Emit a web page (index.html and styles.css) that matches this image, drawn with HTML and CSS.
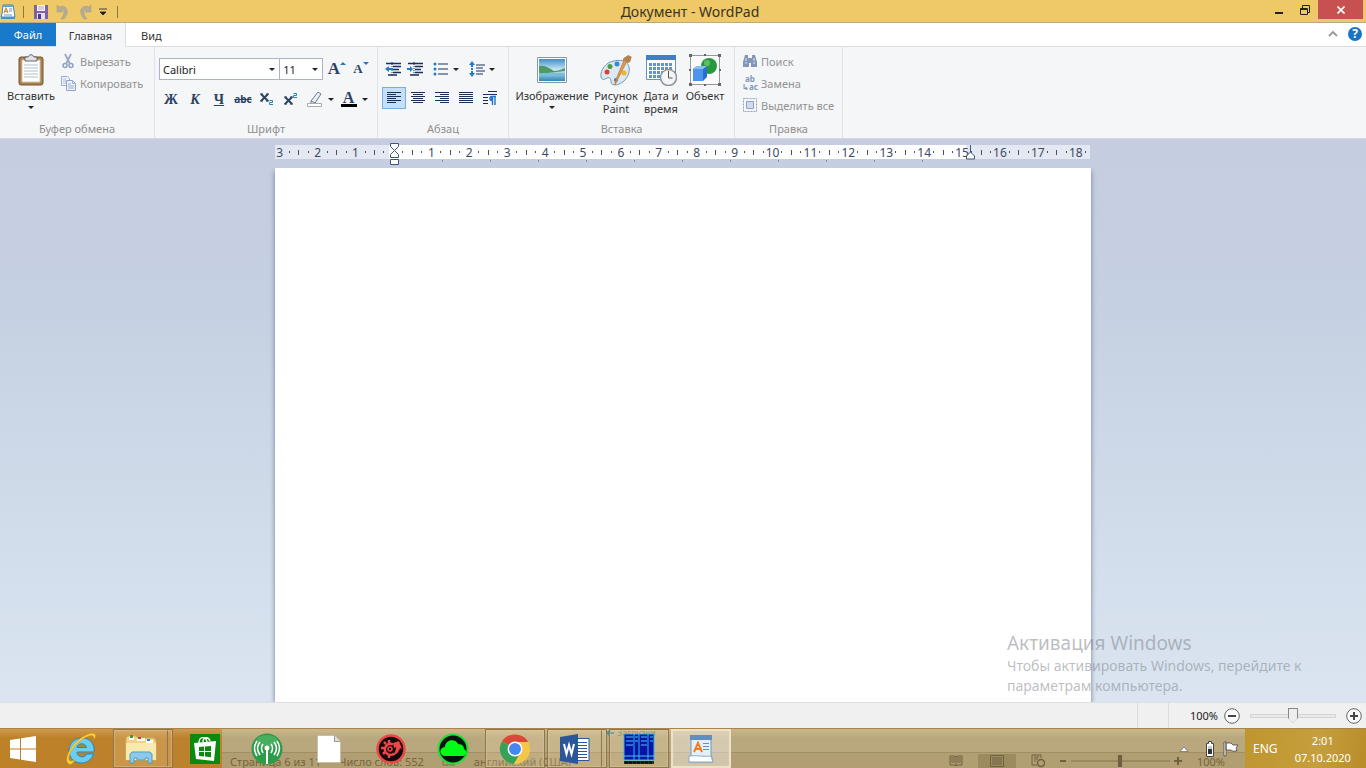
FILE: index.html
```html
<!DOCTYPE html>
<html lang="ru">
<head>
<meta charset="utf-8">
<title>Документ - WordPad</title>
<link rel="stylesheet" href="styles.css">
</head>
<body>
<header class="titlebar">
  <div class="quick">
    <svg class="app-icon" width="16" height="16" viewBox="0 0 16 16"><path d="M3 1h10l2 12H1l1-3z" fill="#fff" stroke="#3c87b8"/><path d="M2.500 1h11v2h-11z" fill="#62a5cf"/><path d="M4 9l2-5 2 5M5 7.500h2" fill="none" stroke="#e08030" stroke-width="1.200"/><path d="M9 5h3M9 7h3M4 11h8" stroke="#5b9bc4"/><path d="M1 13h14v2H1z" fill="#4b92bd"/></svg>
    <span class="sep"></span>
    <button class="qbtn" aria-label="Сохранить"><svg width="14" height="14" viewBox="0 0 14 14"><path d="M0 0h14v14H0z" fill="#7f62a6"/><path d="M3 0h8v6H3z" fill="#f8f4ff"/><path d="M4 2h6M4 4h6" stroke="#b7a5cf"/><path d="M3 8h8v6H3z" fill="#e4dcf0"/><path d="M4 9h3v5H4z" fill="#503a80"/></svg></button>
    <button class="qbtn" aria-label="Отменить"><svg width="16" height="16" viewBox="0 0 16 16"><path d="M2 1l2 2c7-3 12 4 5 12H6c4-5 4-10 0-9l2 2H2z" fill="#b3ad97" stroke="#a39c82" stroke-width=".5"/></svg></button>
    <button class="qbtn" aria-label="Вернуть"><svg width="16" height="16" viewBox="0 0 16 16"><path d="M14 1l-2 2C5 0 0 7 7 15h3C6 10 6 5 10 6L8 8h6z" fill="#b3ad97" stroke="#a39c82" stroke-width=".5"/></svg></button>
    <button class="qbtn more" aria-label="Настройка панели"><svg width="8" height="8" viewBox="0 0 8 8"><path d="M0 1h8M1 4h6L4 7z" fill="#222" stroke="#222" stroke-width=".8"/></svg></button>
    <span class="sep"></span>
  </div>
  <h1 class="title">Документ - WordPad</h1>
  <div class="winbtns">
    <button class="wbtn" aria-label="Свернуть"><svg width="10" height="10" viewBox="0 0 10 10"><path d="M1 7h8v2H1z" fill="#222"/></svg></button>
    <button class="wbtn" aria-label="Восстановить"><svg width="10" height="10" viewBox="0 0 10 10"><path d="M.5 3.500h7v6h-7zM1 4.500h6M2.500 3V.5h7v7H8" fill="none" stroke="#222"/></svg></button>
    <button class="wbtn close" aria-label="Закрыть"><svg width="8" height="8" viewBox="0 0 8 8"><path d="M.5.5l7 7M7.500.5l-7 7" stroke="#fff" stroke-width="1.600"/></svg></button>
  </div>
</header>

<nav class="tabs">
  <button class="tab file">Файл</button>
  <button class="tab active">Главная</button>
  <button class="tab">Вид</button>
  <div class="tabtools">
    <button class="tool" aria-label="Свернуть ленту"><svg width="10" height="8" viewBox="0 0 10 8"><path d="M1 6l4-4 4 4" fill="none" stroke="#999" stroke-width="1.800"/></svg></button>
    <button class="tool help" aria-label="Справка">?</button>
  </div>
</nav>

<main class="ribbon">
  <section class="group g-clip">
    <div class="content">
      <button class="big paste"><svg width="32" height="32" viewBox="0 0 32 32"><rect x="4" y="3" width="24" height="28" rx="2" fill="#a9804a" stroke="#76572f"/><path d="M7 6h18v22H7z" fill="#fff" stroke="#d2c8b7"/><path d="M9 11h14M9 14h14M9 17h14M9 20h14M9 23h14" stroke="#b2bfcc"/><path d="M10 3h3c1-3 5-3 6 0h3v4H10z" fill="#dfe3e6" stroke="#666"/></svg><span>Вставить</span><i class="arrow"></i></button>
      <div class="stack">
        <button class="small" disabled><svg width="16" height="16" viewBox="0 0 16 16"><path d="M5 1l5 10M11 1L6 11" stroke="#9aa9c0" stroke-width="1.800"/><circle cx="5" cy="12.500" r="2" fill="none" stroke="#8fa3c4" stroke-width="1.500"/><circle cx="11" cy="12.500" r="2" fill="none" stroke="#8fa3c4" stroke-width="1.500"/></svg>Вырезать</button>
        <button class="small" disabled><svg width="16" height="16" viewBox="0 0 16 16"><path d="M1.500 1.500h6l2 2v7h-8z" fill="#eef2fa" stroke="#9daed0"/><path d="M3 4h3M3 6h5M3 8h5" stroke="#b2c0dc"/><path d="M6.500 5.500h6l3 3v7h-9z" fill="#eef2fa" stroke="#8fa3c9"/><path d="M12.500 5.500v3h3M8 9h3M8 11h6M8 13h6" fill="none" stroke="#9daed0"/></svg>Копировать</button>
      </div>
    </div>
    <h2>Буфер обмена</h2>
  </section>

  <section class="group g-font">
    <div class="rows">
      <div class="row">
        <label class="combo family"><select aria-label="Шрифт"><option>Calibri</option></select></label>
        <label class="combo size"><select aria-label="Размер шрифта"><option>11</option></select></label>
        <button class="ic grow" aria-label="Увеличить шрифт"><span class="serif s17">A</span><i class="up"></i></button>
        <button class="ic" aria-label="Уменьшить шрифт"><span class="serif s13">A</span><i class="down"></i></button>
      </div>
      <div class="row">
        <button class="ic serif s14">Ж</button>
        <button class="ic serif s14 ital">К</button>
        <button class="ic serif s14 under">Ч</button>
        <button class="ic abc">abc</button>
        <button class="ic xs" aria-label="Подстрочный"><svg width="14" height="14" viewBox="0 0 14 14"><path d="M1 2l7 7M8 2L1 9" stroke="#2c4263" stroke-width="2"/><path d="M0 2h3M6 2h3M0 9h3M6 9h3" stroke="#2c4263"/><path d="M9.500 8.500h3v2h-3v2h3.500" fill="none" stroke="#2287a8"/></svg></button>
        <button class="ic xs" aria-label="Надстрочный"><svg width="14" height="14" viewBox="0 0 14 14"><path d="M1 5l7 7M8 5l-7 7" stroke="#2c4263" stroke-width="2"/><path d="M0 5h3M6 5h3M0 12h3M6 12h3" stroke="#2c4263"/><path d="M9.500 1.500h3v2h-3v2h3.500" fill="none" stroke="#2287a8"/></svg></button>
        <button class="ic wide" aria-label="Цвет выделения"><svg width="16" height="16" viewBox="0 0 16 16"><path d="M4 10l7-9 3 2-6 9-4 1z" fill="#e9eef4" stroke="#6c7b90"/><path d="M4 10l4 2" stroke="#6c7b90"/><path d="M.5 12.500h14v3H.5z" fill="#fff" stroke="#a9adb2"/></svg><i class="arrow"></i></button>
        <button class="ic wide" aria-label="Цвет текста"><span class="fontcolor serif">A</span><i class="arrow"></i></button>
      </div>
    </div>
    <h2>Шрифт</h2>
  </section>

  <section class="group g-para">
    <div class="rows">
      <div class="row">
        <button class="ic" aria-label="Уменьшить отступ"><svg width="16" height="14" viewBox="0 0 16 14"><path d="M1 1.500h15M8 4.500h8M8 7.500h6M8 10.500h8M3 13h9" stroke="#1b3059" stroke-width="1.400"/><path d="M7 0v14" stroke="#1b3059" stroke-dasharray="1 1"/><path d="M0 7l4-3v2h4v2H4v2z" fill="#2278c9"/></svg></button>
        <button class="ic" aria-label="Увеличить отступ"><svg width="16" height="14" viewBox="0 0 16 14"><path d="M1 1.500h15M8 4.500h8M8 7.500h6M8 10.500h8M3 13h9" stroke="#1b3059" stroke-width="1.400"/><path d="M7 0v14" stroke="#1b3059" stroke-dasharray="1 1"/><path d="M6 7L3 4v2H0v2h3v2z" fill="#2278c9"/></svg></button>
        <button class="ic wide" aria-label="Список"><svg width="16" height="14" viewBox="0 0 16 14"><path d="M5 2h10M5 7h10M5 12h10" stroke="#1b3059" stroke-width="1.200"/><circle cx="2" cy="2" r="1.500" fill="#2278c9"/><circle cx="2" cy="7" r="1.500" fill="#2278c9"/><circle cx="2" cy="12" r="1.500" fill="#2278c9"/></svg><i class="arrow"></i></button>
        <button class="ic wide last-ic" aria-label="Междустрочный интервал"><svg width="16" height="16" viewBox="0 0 16 16"><path d="M7 4h9M7 7h7M7 10h9M7 13h7" stroke="#1b3059" stroke-width="1.200"/><path d="M3 0l3 4H4v2H2V4H0zM3 16l3-4H4v-2H2v2H0zM2 7h2v2H2z" fill="#2278c9"/></svg><i class="arrow"></i></button>
      </div>
      <div class="row">
        <button class="ic on" aria-label="По левому краю"><svg width="14" height="12" viewBox="0 0 14 12"><path d="M0 .5h14M0 2.500h9M0 4.500h14M0 6.500h9M0 8.500h14M0 10.500h9" stroke="#1b3059"/></svg></button>
        <button class="ic" aria-label="По центру"><svg width="14" height="12" viewBox="0 0 14 12"><path d="M0 .5h14M2 2.500h10M0 4.500h14M2 6.500h10M0 8.500h14M2 10.500h10" stroke="#1b3059"/></svg></button>
        <button class="ic" aria-label="По правому краю"><svg width="14" height="12" viewBox="0 0 14 12"><path d="M0 .5h14M5 2.500h9M0 4.500h14M5 6.500h9M0 8.500h14M5 10.500h9" stroke="#1b3059"/></svg></button>
        <button class="ic" aria-label="По ширине"><svg width="14" height="12" viewBox="0 0 14 12"><path d="M0 .5h14M0 2.500h14M0 4.500h14M0 6.500h14M0 8.500h14M0 10.500h14" stroke="#1b3059"/></svg></button>
        <button class="ic" aria-label="Абзац"><svg width="14" height="14" viewBox="0 0 14 14"><path d="M5 .5h9M0 3.500h14M0 6.500h5M0 9.500h5M0 12.500h5" stroke="#1b3059"/><path d="M13 5.500H9a2 2 0 0 0 0 4M9.500 5v9M12 5v9" fill="none" stroke="#2278c9" stroke-width="1.400"/><path d="M7 6h3v3H8z" fill="#2278c9"/></svg></button>
      </div>
    </div>
    <h2>Абзац</h2>
  </section>

  <section class="group g-insert">
    <div class="content">
      <button class="big b-img"><svg width="32" height="32" viewBox="0 0 32 32"><defs><linearGradient id="sky" x2="0" y2="1"><stop offset="0" stop-color="#3d8fce"/><stop offset=".5" stop-color="#cfe8f2"/><stop offset="1" stop-color="#2f86b8"/></linearGradient></defs><path d="M1.500 3.500h29v25h-29z" fill="#fff" stroke="#8298a8"/><path d="M3 5h26v22H3z" fill="url(#sky)"/><path d="M3 12c7-1 11 3 15 5 4 0 8-2 11-3v3l-26 3z" fill="#4e9a62"/><path d="M3 19h26v2l-26 1z" fill="#77c0d8"/></svg><span>Изображение</span><i class="arrow"></i></button>
      <button class="big b-paint"><svg width="32" height="32" viewBox="0 0 32 32"><path d="M14 7C6 8 0 16 1 23c1 4 4 2 6 1 3-1 4 1 4 4 1 5 9 3 14-2 5-6 6-14 1-18-3-2-8-2-12-1z" fill="#dce9f2" stroke="#6d9ab8"/><circle cx="7" cy="18" r="2.500" fill="#d9412f"/><circle cx="10" cy="12.500" r="2.500" fill="#4a9c42"/><circle cx="17" cy="10" r="2.500" fill="#3c86d2"/><circle cx="24" cy="19" r="2.500" fill="#efb52b"/><circle cx="16" cy="26" r="2" fill="#3e73c4"/><path d="M27 7L16 29l-1 2 0-3L24 6z" fill="#e09b4c" stroke="#b06d2a" stroke-width=".6"/><path d="M23 6c0-3 3-3 5-5l4 2c-2 2 0 5-4 6z" fill="#b58250"/></svg><span>Рисунок<br>Paint</span></button>
      <button class="big b-date"><svg width="32" height="32" viewBox="0 0 32 32"><path d="M1.500 1.500h29v24h-29z" fill="#fff" stroke="#6c8eb8"/><path d="M1 1h30v5H1z" fill="#3f7fc4"/><path d="M4 10.500h24M4 14.500h24M4 18.500h20M4 22.500h12" stroke="#5e95d0" stroke-width="3" stroke-dasharray="3 1"/><circle cx="23.500" cy="23.500" r="8" fill="#f3f5f7" stroke="#8b949d" stroke-width="1.500"/><path d="M23.500 17v7h4" fill="none" stroke="#555"/></svg><span>Дата и<br>время</span></button>
      <button class="big b-obj"><svg width="32" height="32" viewBox="0 0 32 32"><path d="M1.500 1.500h29v29h-29z" fill="#fbfbfd" stroke="#999"/><path d="M0 0h3v3H0zM29 0h3v3h-3zM0 29h3v3H0zM29 29h3v3h-3zM0 15h2v2H0zM30 15h2v2h-2zM15 0h2v2h-2zM15 30h2v2h-2z" fill="#666"/><circle cx="20" cy="12" r="8" fill="#259a3b"/><circle cx="18" cy="9" r="3" fill="#63bd68"/><path d="M4 15l4-3h10v11l-4 4H4z" fill="#2a6fd0"/><path d="M4 15h10v12H4z" fill="#4c94ec"/><path d="M4 15l4-3h10l-4 3z" fill="#8cbdf5"/></svg><span>Объект</span></button>
    </div>
    <h2>Вставка</h2>
  </section>

  <section class="group g-edit">
    <div class="content stack">
      <button class="small" disabled><svg width="14" height="14" viewBox="0 0 14 14"><path d="M2 1h3v3h4V1h3l2 7v5H8V9H6v4H0V8z" fill="#8396b8"/><path d="M2 9h2M10 9h2M3 4v3M11 4v3" stroke="#dfe6f1"/></svg>Поиск</button>
      <button class="small" disabled><span class="repl"><b>ab</b><b>↳ac</b></span>Замена</button>
      <button class="small" disabled><svg width="14" height="14" viewBox="0 0 14 14"><path d="M.5.500h13v13H.5z" fill="none" stroke="#8fa3c4" stroke-dasharray="2 1"/><path d="M3.500 3.500h7v7h-7z" fill="#cfdaf0" stroke="#8fa3c4"/></svg>Выделить все</button>
    </div>
    <h2>Правка</h2>
  </section>
</main>

<section class="workspace">
  <div class="ruler">
    <div class="scale">
      <span class="cm out"><b>3</b><i></i><i></i><i></i></span>
      <span class="cm out"><b>2</b><i></i><i></i><i></i></span>
      <span class="cm out"><b>1</b><i></i><i></i><i></i></span>
      <span class="cm"><b></b><i></i><i></i><i></i></span>
      <span class="cm"><b>1</b><i></i><i></i><i></i></span>
      <span class="cm"><b>2</b><i></i><i></i><i></i></span>
      <span class="cm"><b>3</b><i></i><i></i><i></i></span>
      <span class="cm"><b>4</b><i></i><i></i><i></i></span>
      <span class="cm"><b>5</b><i></i><i></i><i></i></span>
      <span class="cm"><b>6</b><i></i><i></i><i></i></span>
      <span class="cm"><b>7</b><i></i><i></i><i></i></span>
      <span class="cm"><b>8</b><i></i><i></i><i></i></span>
      <span class="cm"><b>9</b><i></i><i></i><i></i></span>
      <span class="cm"><b>10</b><i></i><i></i><i></i></span>
      <span class="cm"><b>11</b><i></i><i></i><i></i></span>
      <span class="cm"><b>12</b><i></i><i></i><i></i></span>
      <span class="cm"><b>13</b><i></i><i></i><i></i></span>
      <span class="cm"><b>14</b><i></i><i></i><i></i></span>
      <span class="cm edge"><b>15</b><i></i><i></i><i></i></span>
      <span class="cm out"><b>16</b><i></i><i></i><i></i></span>
      <span class="cm out"><b>17</b><i></i><i></i><i></i></span>
      <span class="cm out last"><b>18</b><i></i></span>
    </div>
    <div class="stops"></div>
    <svg class="mark left" width="11" height="24" viewBox="0 0 11 24"><path d="M1.500 1.500h8v3l-4 4 4 4v3h-8v-3l4-4-4-4zM1.500 17.500h8v5h-8z" fill="#fff" stroke="#3c5876"/></svg>
    <svg class="mark right" width="11" height="16" viewBox="0 0 11 16"><path d="M5.500 1v7l4 4v3h-8v-3l4-4" fill="#fff" stroke="#3c5876"/></svg>
  </div>
  <div class="paper" contenteditable="true" role="textbox" aria-label="Документ"></div>
  <aside class="watermark"><p class="wm-title">Активация Windows</p><p>Чтобы активировать Windows, перейдите к<br>параметрам компьютера.</p></aside>
</section>

<footer class="status">
  <span class="cell"></span>
  <div class="zoom">
    <label for="zoom">100%</label>
    <button class="round" aria-label="Уменьшить"><svg width="16" height="16" viewBox="0 0 16 16"><circle cx="8" cy="8" r="7.300" fill="#fafafa" stroke="#666"/><path d="M4 8h8" stroke="#444" stroke-width="2"/></svg></button>
    <input id="zoom" type="range" min="0" max="100" value="50">
    <button class="round" aria-label="Увеличить"><svg width="16" height="16" viewBox="0 0 16 16"><circle cx="8" cy="8" r="7.300" fill="#fafafa" stroke="#666"/><path d="M4 8h8M8 4v8" stroke="#444" stroke-width="2"/></svg></button>
  </div>
</footer>

<nav class="taskbar">
  <div class="ghost">
    <span>Страница 6 из 11</span><span>Число слов: 552</span>
    <svg width="14" height="12" viewBox="0 0 14 12"><path d="M1 1v9h5V2M7 10h6M8 5l4 5M12 5l-4 5" fill="none" stroke="#7d6c48"/></svg>
    <span>английский (США)</span>
    <div class="ghost-right">
      <svg width="14" height="14" viewBox="0 0 14 14"><path d="M1 2h5l1 1 1-1h5v9H8l-1 1-1-1H1zM7 3v9M2 4h4M2 6h4M2 8h4M8 4h4M8 6h4M8 8h4" fill="none" stroke="#6f6040"/></svg>
      <span class="ghost-on"><svg width="14" height="12" viewBox="0 0 14 12"><path d="M.5.5h13v11H.5zM2 3h10M2 5h10M2 7h10M2 9h10" fill="none" stroke="#6f6040"/></svg></span>
      <svg width="14" height="14" viewBox="0 0 14 14"><path d="M6 11H1V1h9v3M3 3h5M3 5h4M3 7h2" fill="none" stroke="#6f6040"/><circle cx="10" cy="9" r="3.500" fill="none" stroke="#6f6040" stroke-width="1.500"/></svg>
      <svg class="ghost-zoom" width="122" height="12" viewBox="0 0 122 12"><path d="M0 6h6M114 6h8M118 2v8" stroke="#6f6040" stroke-width="2"/><path d="M11 6h99" stroke="#83734d"/><path d="M58 0h4v12h-4z" fill="#6f6040"/></svg>
      <span>100%</span>
    </div>
  </div>
  <div class="snap"><svg width="8" height="8" viewBox="0 0 8 8"><path d="M0 4l4-4v3h4v2H4v3z" fill="#4c92a0"/></svg>Загрузки</div>
  <div class="tasks">
    <button class="start" aria-label="Пуск"><svg width="28" height="26" viewBox="0 0 28 26"><path d="M1 4l10-1.500V12.500H1zM12 2.300L27 0v12.500H12zM1 13.500h10v10L1 22zM12 13.500h15V26l-15-2.300z" fill="#fff"/></svg></button>
    <button class="task" aria-label="Internet Explorer"><svg width="32" height="32" viewBox="0 0 32 32"><path d="M29 19H12c0 5 7 7 10 2h6.500c-2 6-7 9-12 9C8 30 4 24 4 17.500S9 5 17 5s13 6 12 14zM12 14.500h9.500c-1-5-8.500-5-9.500 0z" fill="#6cccf2" stroke="#2389c2"/><path d="M4 31C-2 27 5 13 16 5 22 1 28-1 30 1c1 2 0 4-1 5 0-5-5-4-11 0C8 13 3 22 4 26c0 3 3 2 6 1-2 3-4 5-6 4z" fill="#ffd435" stroke="#d79c1c" stroke-width=".6"/></svg></button>
    <button class="task open multi" aria-label="Проводник"><svg width="32" height="30" viewBox="0 0 32 30"><path d="M1 4l2-2h8l2 2h16l2 3v19H1z" fill="#eed484" stroke="#cfae58"/><path d="M4 3h5v3H4zM12 4h8v3h-8zM21 6h7v3h-7z" fill="#fff"/><path d="M5 1h3v3H5z" fill="#39a13a"/><path d="M13 3h3v2h-3z" fill="#c34a31"/><path d="M22 5h3v2h-3z" fill="#3385ce"/><path d="M1 9h30v17H1z" fill="#f8e9ae"/><path d="M5 29V20l2-2h18l2 2v9h-4v-5h-3v2h-8v-2H9v5z" fill="#8dcaea" stroke="#4d9dc8"/></svg></button>
    <button class="task" aria-label="Магазин"><svg width="30" height="30" viewBox="0 0 30 30"><path d="M0 0h30v30H0z" fill="#0c8a10"/><path d="M4 9l22-2-2 20-18-2z" fill="#fff"/><path d="M9 9c0-7 7-7 8-1M13 8c0-6 6-5 7-1" fill="none" stroke="#fff" stroke-width="1.300"/><path d="M9 13l5-.5V17H9zM15 12.400l6-.4v5h-6zM9 18h5v4.500L9 22zM15 18h6v5.300l-6-.7z" fill="#0c8a10"/></svg></button>
    <button class="task" aria-label="Сеть"><svg width="32" height="32" viewBox="0 0 32 32"><circle cx="16" cy="16" r="15.500" fill="#2b9d48"/><ellipse cx="16" cy="8" rx="11" ry="6" fill="#5bbb70" opacity=".6"/><path d="M16 17v14" stroke="#fff" stroke-width="2"/><circle cx="16" cy="15" r="2.500" fill="#fff"/><path d="M12 11q-3 4 0 9M20 11q3 4 0 9M9 9q-5 6 0 13M23 9q5 6 0 13M6 8q-5 7 0 15M26 8q5 7 0 15" fill="none" stroke="#fff" stroke-width="1.500"/></svg></button>
    <button class="task" aria-label="Файл"><svg width="24" height="28" viewBox="0 0 24 28"><path d="M.5.500h17l6 6v21H.5z" fill="#fff" stroke="#c5bfae"/><path d="M17.500.5v6h6" fill="#ddd" stroke="#999"/></svg></button>
    <button class="task" aria-label="Настройки"><svg width="30" height="30" viewBox="0 0 30 30"><circle cx="15" cy="15" r="13.500" fill="#150808" stroke="#ed4747" stroke-width="2.500"/><path d="M18 19.500a5.500 5.500 0 1 1-1-9" fill="none" stroke="#ed4747" stroke-width="2.500"/><path d="M8 8l2 2M13 6v3M5 14h3M7 20l2-2M13 24v-3" stroke="#ed4747" stroke-width="2.500"/><path d="M17 9l6-2 3 8-2-1c-1 4-4 7-8 8 3-3 4-6 4-9l-2 1z" fill="#ed4747"/><circle cx="14" cy="15" r="2" fill="none" stroke="#ed4747" stroke-width="1.500"/></svg></button>
    <button class="task" aria-label="Облако"><svg width="32" height="32" viewBox="0 0 32 32"><circle cx="16" cy="16" r="14.500" fill="#06130a" stroke="#20e135" stroke-width="2"/><path d="M5 22c-4-4 0-8 3-8 0-8 11-9 13-3 5 0 6 3 6 5 4 2 2 7-1 7H7z" fill="#00fb16"/></svg></button>
    <button class="task open" aria-label="Chrome"><svg width="32" height="32" viewBox="0 0 32 32"><circle cx="16" cy="16" r="15" fill="#f3c747"/><path d="M16 16L3 8.500C8-1 24-1 29 8.500z" fill="#d8483b"/><path d="M3 8.500C-3 18 4 30 15 31l7-12-6-3z" fill="#35a159"/><path d="M16 9h13c5 10-2 22-14 22l7-12z" fill="#f3c747"/><circle cx="16" cy="16" r="7.500" fill="#fff"/><circle cx="16" cy="16" r="6" fill="#4587ef"/></svg></button>
    <button class="task open multi" aria-label="Word"><svg width="30" height="30" viewBox="0 0 30 30"><path d="M15 4.500h14v22H15z" fill="#fff" stroke="#2b579a"/><path d="M18 8.500h9M18 11.500h9M18 14.500h9M18 17.500h9M18 20.500h9M18 23.500h9" stroke="#2b579a"/><path d="M0 3l18-3v30L0 27z" fill="#2b579a"/><path d="M4 10l2.500 10L9 11l2.500 9L14 10" fill="none" stroke="#fff" stroke-width="2"/></svg></button>
    <button class="task open" aria-label="Far"><svg width="32" height="32" viewBox="0 0 32 32"><path d="M1 1h30v26H1z" fill="#0612a8" stroke="#28bbe8"/><path d="M11 1v26M16 1v26M25 1v26" stroke="#28bbe8"/><path d="M3 4h7M3 8h7M3 12h7M12 4h3M12 8h3M18 4h6M18 8h6M18 12h6M27 4h3M27 8h3M1 23h30" stroke="#45c9ee"/><path d="M1 28h30v3H1z" fill="#073d45"/><path d="M2 29.500h28" stroke="#05090c" stroke-width="2" stroke-dasharray="3 1"/></svg></button>
    <button class="task open current" aria-label="WordPad"><svg width="26" height="28" viewBox="0 0 26 28"><path d="M3 1h20v18l2 8H1l2-7z" fill="#e4eff8" stroke="#6f9bc2"/><path d="M2 0h22v5H2z" fill="#5f8fbe"/><path d="M6 17l4-9 4 9M7.500 14h5" fill="none" stroke="#ef7e23" stroke-width="2"/><path d="M15 8.500h6M15 11.500h6M15 14.500h6" stroke="#5c93c0"/><path d="M1 21c8-1 16 1 22 0l2 6H1z" fill="#fff" stroke="#8cabc5"/></svg></button>
  </div>
  <div class="tray">
    <button class="ticon" aria-label="Скрытые значки"><svg width="10" height="6" viewBox="0 0 10 6"><path d="M1 5.500L5 1l4 4.500z" fill="#fff" stroke="#555" stroke-width=".6"/></svg></button>
    <button class="ticon" aria-label="Батарея"><svg width="10" height="16" viewBox="0 0 10 16"><path d="M3.500.5h3v2h2v13h-7v-13h2z" fill="#fff" stroke="#444"/><path d="M3 5h4v3H3z" fill="#ccc"/><path d="M3 8h4v5H3z" fill="#333"/></svg></button>
    <button class="ticon" aria-label="Центр поддержки"><svg width="16" height="16" viewBox="0 0 16 16"><path d="M1 1h2v14H1zM3 2h5l2 2h5l-2 3 1 3H9L8 9H3z" fill="#fff" stroke="#444" stroke-width=".8"/></svg></button>
  </div>
  <div class="clockarea">
    <button class="lang">ENG</button>
    <button class="clock">2:01<br>07.10.2020</button>
  </div>
</nav>
</body>
</html>
```
FILE: styles.css
```css
* { box-sizing: border-box; }
body {
  margin: 0;
  height: 100vh;
  display: flex;
  flex-direction: column;
  overflow: hidden;
  font-family: "Noto Sans", "Open Sans", sans-serif;
  font-size: 11px;
  line-height: 13px;
  color: #444;
}
button {
  margin: 0;
  padding: 0;
  border: 0;
  background: none;
  font: inherit;
  color: inherit;
}
svg { display: block; flex: none; }
h1, h2, p { margin: 0; font-weight: normal; }

/* title bar */
.titlebar {
  display: grid;
  grid-template-columns: 1fr auto 1fr;
  height: 23px;
  background: #efc868;
  border-bottom: 1px solid #b5ab8b;
}
.quick { display: flex; align-items: center; }
.sep { width: 1px; height: 12px; margin: 0 6px 0 7px; background: #8d7741; }
.qbtn { width: 22px; height: 22px; display: flex; align-items: center; justify-content: center; }
.more { width: 14px; }
.title { font-size: 14px; line-height: 23px; color: #3b3322; padding-left: 14px; }
.winbtns { display: flex; justify-content: flex-end; align-items: flex-start; padding-right: 3px; }
.wbtn { width: 26px; height: 19px; display: flex; align-items: center; justify-content: center; }
.close { width: 45px; background: #c75050; }

/* tabs */
.tabs { display: flex; flex: none; height: 24px; background: #fff; border-bottom: 1px solid #dcdddf; }
.tab { padding: 0 15px; height: 24px; color: #333; }
.file { width: 56px; padding: 0; height: 23px; background: #1979ca; color: #fff; }
.active { width: 70px; padding: 0; background: #f5f6f8; border-right: 1px solid #dcdddf; }
.tabtools { margin-left: auto; display: flex; align-items: center; gap: 10px; padding: 0 4px 2px 0; }
.help { width: 14px; height: 14px; border-radius: 50%; background: #1a73c8; color: #fff; font-size: 12px; font-weight: bold; }

/* ribbon */
.ribbon { display: flex; flex: none; height: 91px; background: #f5f6f8; }
.group {
  display: flex;
  flex-direction: column;
  justify-content: space-between;
  border-right: 1px solid #e0e2e5;
  padding: 3px 0;
}
.group h2 { font-size: 11px; line-height: 13px; text-align: center; color: #8e8e8e; }
.content { display: flex; }
.g-clip { width: 155px; }
.g-font { width: 223px; }
.g-para { width: 131px; }
.g-insert { width: 226px; }
.g-edit { width: 108px; }
.big { display: flex; flex-direction: column; align-items: center; padding-top: 4px; gap: 3px; color: #333; white-space: nowrap; }
.big .arrow { margin-top: 1px; }
.paste { width: 60px; padding-left: 2px; }
.b-img { width: 86px; }
.b-paint { width: 42px; }
.b-date { width: 48px; }
.b-obj { width: 40px; }
.stack { display: flex; flex-direction: column; }
.small { display: flex; align-items: center; gap: 4px; height: 22px; color: #929292; white-space: nowrap; }
.g-edit .stack { padding-left: 8px; }
.arrow { width: 0; height: 0; flex: none; border: 3px solid transparent; border-top-color: #222; border-bottom: 0; }
.rows { display: flex; flex-direction: column; gap: 7px; padding: 8px 4px 0; }
.row { display: flex; height: 22px; }
.ic { width: 24px; height: 22px; display: flex; align-items: center; justify-content: center; flex: none; color: #2c4263; }
.g-font .row:last-child { padding-top: 1px; }
.g-para .row:first-child .ic { width: 22px; }
.wide { width: 34px; gap: 5px; }
.g-para .row:first-child .wide { width: 40px; gap: 4px; }
.g-para .row:first-child .last-ic { width: 31px; }
.on { background: #c5dff8; border: 1px solid #78aede; }
.combo { position: relative; border: 1px solid #abb4c4; background: #fff; height: 22px; }
.family { width: 122px; }
.size { width: 43px; border-left: 0; }
.combo select {
  appearance: none;
  width: 100%;
  height: 100%;
  border: 0;
  background: none;
  padding: 0 3px;
  font: inherit;
  color: #222;
}
.combo::after {
  content: "";
  position: absolute;
  right: 4px;
  top: 9px;
  border: 3px solid transparent;
  border-top-color: #222;
  border-bottom: 0;
}
.serif { font-family: "Liberation Serif", serif; font-weight: bold; }
.s17 { font-size: 17px; line-height: 22px; }
.s14 { font-size: 14px; }
.s13 { font-size: 13px; line-height: 22px; }
.grow { margin-left: 2px; }
.up, .down { align-self: flex-start; margin-top: 4px; border: 3px solid transparent; }
.up { border-bottom-color: #2278c9; border-top: 0; }
.down { border-top-color: #2278c9; border-bottom: 0; }
.ital { font-style: italic; }
.under { text-decoration: underline; }
.abc { font-weight: bold; font-size: 10px; text-decoration: line-through; }
.fontcolor { width: 16px; height: 16px; font-size: 16px; line-height: 13px; border-bottom: 3px solid #000; }
.repl { width: 14px; font-size: 8px; line-height: 8px; color: #8396b8; display: flex; flex-direction: column; align-items: center; }

/* workspace */
.workspace {
  position: relative;
  flex: 1;
  min-height: 0;
  display: flex;
  flex-direction: column;
  align-items: center;
  background: linear-gradient(#c6cde0, #c5d0e2 30%, #dbe5f1);
  border-top: 1px solid #d5d9e4;
}
.ruler { position: relative; flex: none; width: 816px; height: 29px; padding: 6px 1px 0 0; }
.scale { display: flex; height: 14px; background: #fff; }
.cm { flex: 1; display: grid; grid-template-columns: repeat(4, 1fr); align-items: center; }
.cm > * { display: flex; justify-content: center; width: 0; justify-self: center; }
.cm b { font-weight: normal; font-size: 12px; line-height: 13px; color: #3c4a60; }
.cm i { justify-self: center; width: 1px; height: 2px; background: #4a5260; }
.cm i:nth-child(3) { height: 5px; }
.out { background: #e4e8f2; }
.edge { background: linear-gradient(90deg, #fff 24%, #e4e8f2 24%); }
.last { flex: 0 0 19px; grid-template-columns: 1fr 1fr; }
.stops { height: 2px; margin: 1px 160px 0 167px; background: repeating-linear-gradient(90deg, #8993a8 0 1px, transparent 1px 48px); }
.mark { position: absolute; }
.left { left: 114px; top: 3px; }
.right { left: 690px; top: 5px; }
.paper { flex: 1; width: 816px; background: #fff; box-shadow: 0 3px 5px #6d7f98; clip-path: inset(0 -6px); }
.watermark { position: absolute; left: calc(50% + 324px); bottom: 6px; color: #80848c88; font-size: 14px; line-height: 20px; white-space: nowrap; }
.wm-title { font-size: 19px; line-height: 26px; }

/* status bar */
.status { display: flex; flex: none; justify-content: flex-end; height: 26px; background: #f0f0f0; border-top: 1px solid #dcdfe4; }
.cell { width: 32px; border: solid #dcdcdc; border-width: 0 1px; }
.zoom { display: flex; align-items: center; gap: 10px; padding: 0 4px 0 21px; color: #222; font-size: 11px; }
.zoom label { margin-right: -4px; }
.zoom input { appearance: none; width: 86px; height: 16px; margin: 0; background: none; }
.zoom input::-webkit-slider-runnable-track { height: 4px; border: 1px solid #d2d4d5; background: #e8eaea; }
.zoom input::-webkit-slider-thumb {
  appearance: none;
  width: 10px;
  height: 15px;
  margin-top: -7px;
  background: #949494;
  clip-path: polygon(0 0, 100% 0, 100% 70%, 50% 100%, 0 70%);
  box-shadow: inset 0 0 0 1px #888, inset 0 0 0 8px #eee;
}

/* taskbar */
.taskbar {
  position: relative;
  display: flex;
  flex: none;
  height: 40px;
  background: linear-gradient(#ffe8c040, transparent 9px), linear-gradient(90deg, #bd8128, #bc812d 222px, #b9a77d 222px);
  border-top: 1px solid #a9854a;
}
.ghost {
  position: absolute;
  left: 222px;
  right: 121px;
  top: 23px;
  bottom: 0;
  display: flex;
  align-items: center;
  gap: 18px;
  padding: 1px 20px 0 8px;
  border-top: 1px solid #a08e64;
  background: #b19e72;
  color: #75643f;
  white-space: nowrap;
}
.ghost-right { margin-left: auto; display: flex; align-items: center; gap: 15px; }
.ghost-on { width: 38px; height: 15px; display: flex; align-items: center; justify-content: center; background: #9d8b60; }
.snap { position: absolute; left: 606px; top: 0; display: flex; gap: 3px; font-size: 9px; line-height: 8px; color: #65866f; }
.tasks { position: relative; display: flex; gap: 2px; }
.task, .start { width: 60px; height: 39px; display: flex; align-items: center; justify-content: center; }
.start { width: 49px; padding-right: 3px; }
.open { border: 1px solid #8c7650; background: #ffe9c333; box-shadow: inset 0 0 0 1px #e1ca9b66; }
.multi { padding-right: 5px; background: linear-gradient(90deg, #ffe9c333 53px, #8c7650 53px 54px, #ffe9c333 54px); }
.current { background: #ffffff66; border: 2px solid #ece2ca; }
.tray { position: relative; margin-left: auto; display: flex; align-items: center; gap: 16px; padding-right: 6px; }
.ticon + .ticon + .ticon { margin-left: -8px; }
.clockarea { position: relative; width: 121px; display: flex; align-items: center; background: linear-gradient(100deg, #bf952e, #c59f3d 60%, #b98b29); color: #fff; font-size: 12px; }
.lang { padding: 0 8px; }
.clock { flex: 1; font-size: 11px; line-height: 17px; padding-right: 6px; }
```
